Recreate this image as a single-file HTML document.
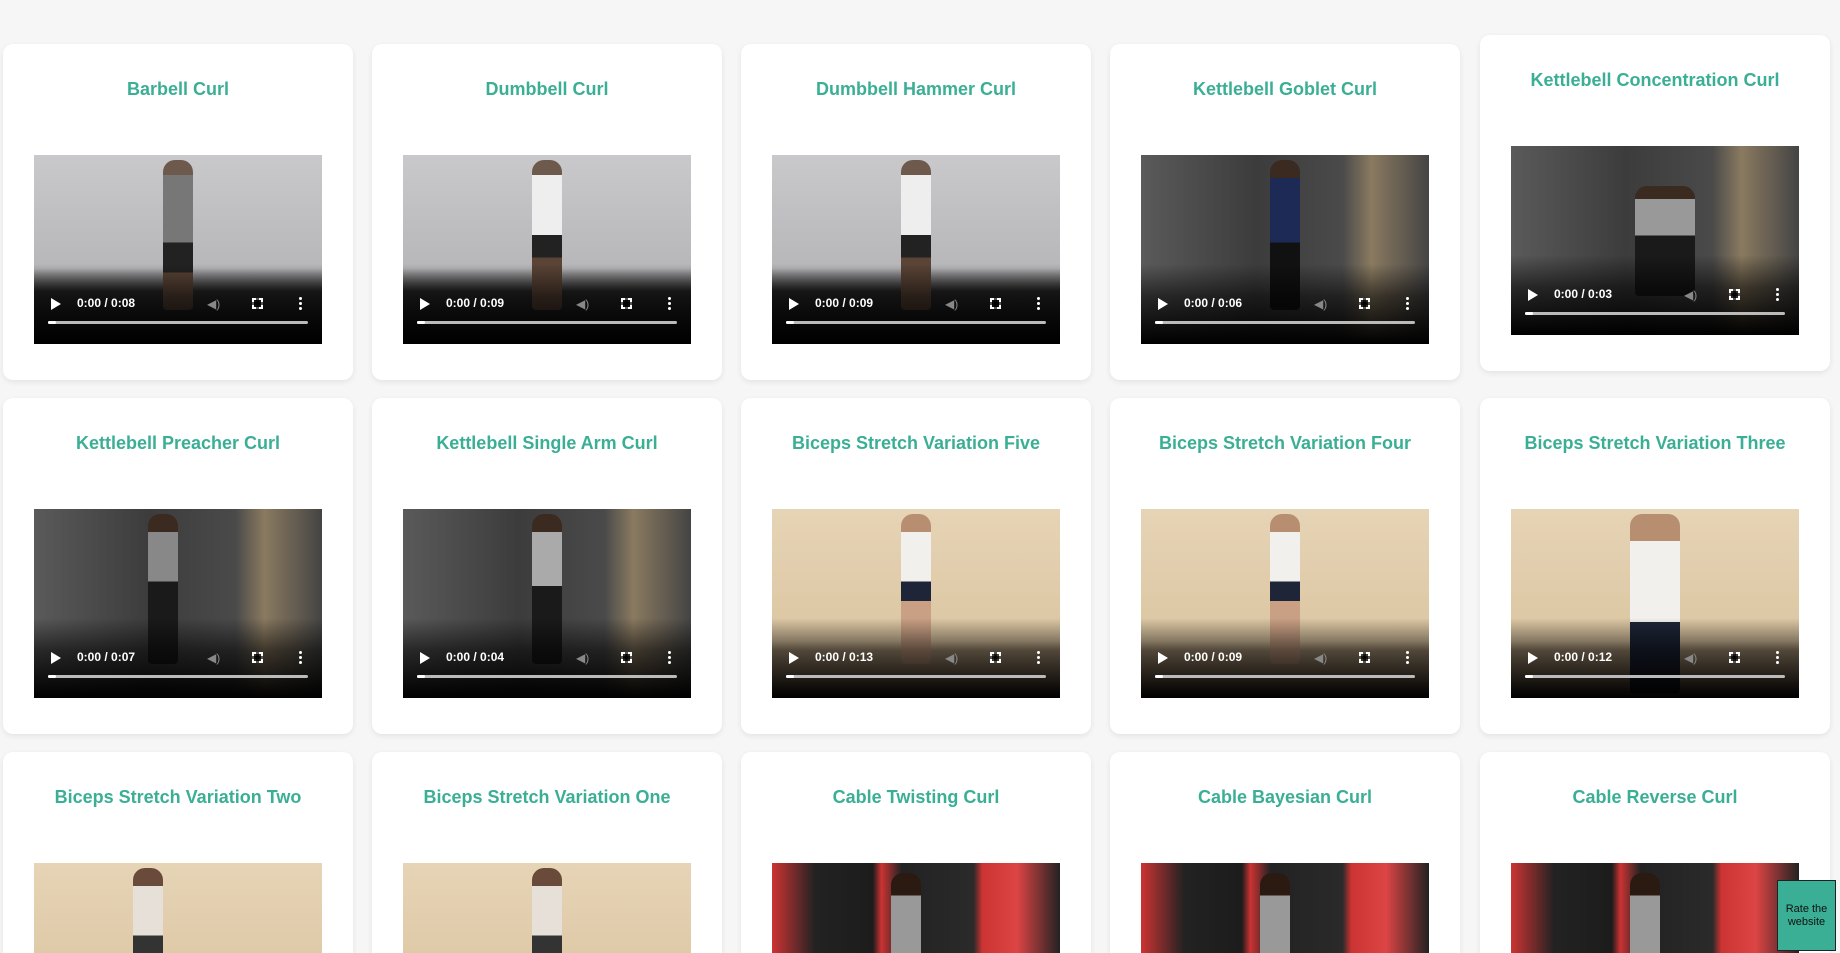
<!DOCTYPE html>
<html style="width:1840px;height:953px;overflow:hidden"><head><meta charset="utf-8"><style>
*{margin:0;padding:0;box-sizing:border-box}
body{width:1840px;height:953px;background:#f6f6f6;overflow:hidden;position:relative;font-family:"Liberation Sans",Arial,sans-serif}
.c{position:absolute;width:350px;height:336px;background:#fff;border-radius:10px;box-shadow:0 2px 6px rgba(0,0,0,.08)}
.c h3{position:absolute;top:35px;left:0;right:0;text-align:center;color:#3aaf95;font-size:18px;font-weight:bold}
.v{position:absolute;left:31px;top:111px;width:288px;height:189px;overflow:hidden}
.g1{background:linear-gradient(#c9c9cc,#b7b7ba 60%,#2a2a2a 72%,#1a1a1a)}
.g2{background:linear-gradient(90deg,#5a5a5a,#3c3c3c 40%,#4a4a4a 70%,#8a7a60 80%,#444);}
.g3{background:linear-gradient(#e6d4b6,#dcc6a2 70%,#b79f80 75%,#9c8468)}
.g4{background:linear-gradient(90deg,#c33 0,#222 15%,#1c1c1c 35%,#c33 38%,#222 45%,#2a2a2a 70%,#c33 73%,#d44 85%,#222 100%)}
.p{position:absolute;left:50%;top:5px;width:30px;margin-left:-15px;height:150px;border-radius:12px 12px 4px 4px}
.sh{position:absolute;left:0;right:0;bottom:0;height:80px;background:linear-gradient(rgba(0,0,0,0),rgba(0,0,0,.55) 40%,#000)}
.pl{position:absolute;left:17px;top:143px;width:0;height:0;border-left:10px solid #fff;border-top:6px solid transparent;border-bottom:6px solid transparent}
.t{position:absolute;left:43px;top:141px;color:#fff;font-size:12px;font-weight:bold}
.vo{position:absolute;left:173px;top:142px;width:14px;height:12px;color:#888;font-size:12px}
.fs{position:absolute;left:218px;top:143px;width:11px;height:11px;border:2px solid #fff}
.fs:before{content:"";position:absolute;left:2px;top:-2px;width:3px;height:11px;background:#000a}
.fs:after{content:"";position:absolute;top:2px;left:-2px;width:11px;height:3px;background:#000a}
.mn{position:absolute;left:265px;top:142px;width:3px;height:3px;background:#fff;border-radius:50%;box-shadow:0 5px #fff,0 10px #fff}
.pb{position:absolute;left:14px;top:166px;width:260px;height:3px;background:#bbb;border-radius:2px}
.pb:before{content:"";position:absolute;left:0;top:0;width:8px;height:3px;background:#fff;border-radius:2px}
.rate{position:absolute;left:1777px;top:880px;width:59px;height:71px;background:#3aaf95;border:1px solid #222;font-size:11px;color:#111;text-align:center;padding-top:22px;line-height:13px}
</style></head><body>

<div class="c" style="left:3px;top:44px"><h3>Barbell Curl</h3><div class="v g1"><div class="p" style="background:linear-gradient(#6d5a4c 0 10%,#777 10% 55%,#222 55% 75%,#5a4436 75%)"></div><div class="sh"></div><div class="pl"></div><div class="t">0:00 / 0:08</div><div class="vo">◀)</div><div class="fs"></div><div class="mn"></div><div class="pb"></div></div></div>
<div class="c" style="left:372px;top:44px"><h3>Dumbbell Curl</h3><div class="v g1"><div class="p" style="background:linear-gradient(#6d5a4c 0 10%,#eee 10% 50%,#222 50% 65%,#5a4436 65%)"></div><div class="sh"></div><div class="pl"></div><div class="t">0:00 / 0:09</div><div class="vo">◀)</div><div class="fs"></div><div class="mn"></div><div class="pb"></div></div></div>
<div class="c" style="left:741px;top:44px"><h3>Dumbbell Hammer Curl</h3><div class="v g1"><div class="p" style="background:linear-gradient(#6d5a4c 0 10%,#eee 10% 50%,#222 50% 65%,#5a4436 65%)"></div><div class="sh"></div><div class="pl"></div><div class="t">0:00 / 0:09</div><div class="vo">◀)</div><div class="fs"></div><div class="mn"></div><div class="pb"></div></div></div>
<div class="c" style="left:1110px;top:44px"><h3>Kettlebell Goblet Curl</h3><div class="v g2"><div class="p" style="background:linear-gradient(#3a2a20 0 12%,#1d2a55 12% 55%,#111 55%)"></div><div class="sh"></div><div class="pl"></div><div class="t">0:00 / 0:06</div><div class="vo">◀)</div><div class="fs"></div><div class="mn"></div><div class="pb"></div></div></div>
<div class="c" style="left:1480px;top:35px"><h3>Kettlebell Concentration Curl</h3><div class="v g2"><div class="p" style="width:60px;margin-left:-20px;top:40px;height:110px;background:linear-gradient(#3a2a20 0 12%,#999 12% 45%,#1a1a1a 45%)"></div><div class="sh"></div><div class="pl"></div><div class="t">0:00 / 0:03</div><div class="vo">◀)</div><div class="fs"></div><div class="mn"></div><div class="pb"></div></div></div>

<div class="c" style="left:3px;top:398px"><h3>Kettlebell Preacher Curl</h3><div class="v g2"><div class="p" style="margin-left:-30px;background:linear-gradient(#3a2a20 0 12%,#888 12% 45%,#1a1a1a 45%)"></div><div class="sh"></div><div class="pl"></div><div class="t">0:00 / 0:07</div><div class="vo">◀)</div><div class="fs"></div><div class="mn"></div><div class="pb"></div></div></div>
<div class="c" style="left:372px;top:398px"><h3>Kettlebell Single Arm Curl</h3><div class="v g2"><div class="p" style="background:linear-gradient(#3a2a20 0 12%,#aaa 12% 48%,#1a1a1a 48%)"></div><div class="sh"></div><div class="pl"></div><div class="t">0:00 / 0:04</div><div class="vo">◀)</div><div class="fs"></div><div class="mn"></div><div class="pb"></div></div></div>
<div class="c" style="left:741px;top:398px"><h3>Biceps Stretch Variation Five</h3><div class="v g3"><div class="p" style="background:linear-gradient(#b88e70 0 12%,#f2f0ec 12% 45%,#1e2538 45% 58%,#c9a084 58%)"></div><div class="sh"></div><div class="pl"></div><div class="t">0:00 / 0:13</div><div class="vo">◀)</div><div class="fs"></div><div class="mn"></div><div class="pb"></div></div></div>
<div class="c" style="left:1110px;top:398px"><h3>Biceps Stretch Variation Four</h3><div class="v g3"><div class="p" style="background:linear-gradient(#b88e70 0 12%,#f2f0ec 12% 45%,#1e2538 45% 58%,#c9a084 58%)"></div><div class="sh"></div><div class="pl"></div><div class="t">0:00 / 0:09</div><div class="vo">◀)</div><div class="fs"></div><div class="mn"></div><div class="pb"></div></div></div>
<div class="c" style="left:1480px;top:398px"><h3>Biceps Stretch Variation Three</h3><div class="v g3"><div class="p" style="width:50px;margin-left:-25px;height:180px;background:linear-gradient(#b88e70 0 15%,#f2f0ec 15% 60%,#1e2538 60%)"></div><div class="sh"></div><div class="pl"></div><div class="t">0:00 / 0:12</div><div class="vo">◀)</div><div class="fs"></div><div class="mn"></div><div class="pb"></div></div></div>

<div class="c" style="left:3px;top:752px"><h3>Biceps Stretch Variation Two</h3><div class="v g3"><div class="p" style="margin-left:-45px;background:linear-gradient(#6a4a3a 0 12%,#e6e0d8 12% 45%,#333 45%)"></div></div></div>
<div class="c" style="left:372px;top:752px"><h3>Biceps Stretch Variation One</h3><div class="v g3"><div class="p" style="background:linear-gradient(#6a4a3a 0 12%,#e6e0d8 12% 45%,#333 45%)"></div></div></div>
<div class="c" style="left:741px;top:752px"><h3>Cable Twisting Curl</h3><div class="v g4"><div class="p" style="margin-left:-25px;top:10px;background:linear-gradient(#2a1a12 0 15%,#999 15%)"></div></div></div>
<div class="c" style="left:1110px;top:752px"><h3>Cable Bayesian Curl</h3><div class="v g4"><div class="p" style="margin-left:-25px;top:10px;background:linear-gradient(#2a1a12 0 15%,#999 15%)"></div></div></div>
<div class="c" style="left:1480px;top:752px"><h3>Cable Reverse Curl</h3><div class="v g4"><div class="p" style="margin-left:-25px;top:10px;background:linear-gradient(#2a1a12 0 15%,#999 15%)"></div></div></div>

<div class="rate">Rate the<br>website</div>
</body></html>
